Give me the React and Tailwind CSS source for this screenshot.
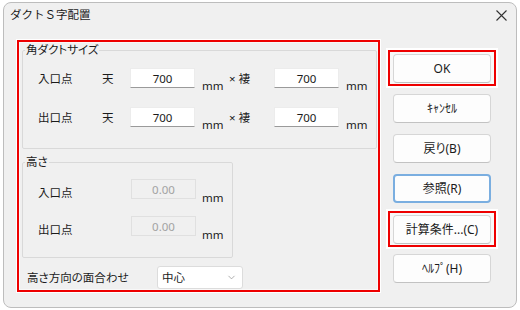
import { ChevronDown } from "lucide-react";

const font = "font-['Noto_Sans','Noto_Sans_CJK_JP',sans-serif]";
const palt = "[font-feature-settings:'palt']";

function Btn({ children, focused, className = "" }) {
  return (
    <button
      type="button"
      className={`w-[98px] h-[29px] flex items-center justify-center rounded-[4px] bg-[#fdfdfd] text-[12px] leading-[14px] text-[#1b1b1b] ${palt} ${
        focused ? "border-2 border-[#7aaee0]" : "border border-[#d6d6d6] border-b-[#c2c2c2]"
      } ${className}`}
    >
      {children}
    </button>
  );
}

function RedBox({ children, className = "" }) {
  return (
    <div className={`w-[108px] h-[36px] border-2 border-[#ee0000] shadow-[0_0_0_2px_#fff] bg-[#f8f8f8] pt-[2px] px-[3px] ${className}`}>
      {children}
    </div>
  );
}

function SizeRow({ label, className = "" }) {
  return (
    <div className={`flex h-[20px] text-[11.5px] ${className}`}>
      <span className="w-[64px] leading-[20px] mt-[1px]">{label}</span>
      <span className="w-[28px] leading-[20px] mt-[1px]">天</span>
      <input
        readOnly
        value="700"
        className="w-[65px] h-[20px] bg-white text-center text-[11.5px] border border-[#ececec] border-b-[#9a9a9a] outline-none"
      />
      <span className="w-[34px] pl-[7px] mt-[11px] leading-[14px]">mm</span>
      <span className="w-[45px] leading-[20px] mt-[1px]">× 褄</span>
      <input
        readOnly
        value="700"
        className="w-[65px] h-[20px] bg-white text-center text-[11.5px] border border-[#ececec] border-b-[#9a9a9a] outline-none"
      />
      <span className="pl-[7px] mt-[11px] leading-[14px]">mm</span>
    </div>
  );
}

function HeightRow({ label, className = "" }) {
  return (
    <div className={`flex h-[20px] text-[11.5px] ${className}`}>
      <span className="w-[93px] leading-[20px] mt-[4px]">{label}</span>
      <input
        readOnly
        disabled
        value="0.00"
        className="w-[65px] h-[20px] bg-[#f0f0f0] text-center text-[11.5px] text-[#a3a3a3] border border-[#e0e0e0] outline-none"
      />
      <span className="pl-[6px] mt-[12px] leading-[14px]">mm</span>
    </div>
  );
}

export default function App() {
  return (
    <div className={`w-[520px] h-[310px] bg-white pt-[2px] px-[3px] pb-[2px] text-[#1b1b1b] ${font}`}>
      <div className="h-[306px] rounded-[8px] border border-[#bdbdbd] bg-[#f0f0f0] flex flex-col overflow-hidden">
        <div className="h-[24px] flex items-center justify-between pl-[6px] pr-[9px]">
          <span className="text-[11.5px] leading-[14px]">ダクトＳ字配置</span>
          <svg width="11" height="11" viewBox="0 0 11 11" className="mt-[1px]">
            <path d="M0.5 0.5 L10.5 10.5 M10.5 0.5 L0.5 10.5" stroke="#333" strokeWidth="1.1" fill="none" />
          </svg>
        </div>

        <div className="flex pl-[13px] pt-[13px]">
          {/* left panel */}
          <div className={`w-[363px] h-[252px] border-2 border-[#ee0000] shadow-[0_0_0_1px_#fff,inset_0_0_0_1px_#f8f8f8] flex flex-col ${palt}`}>
            <fieldset className="ml-[3px] w-[355px] h-[107px] border border-[#d9d9d9] rounded-[2px]">
              <legend className="ml-[2px] px-[1px] text-[11.5px] leading-[16px]">角ダクトサイズ</legend>
              <div className="pl-[15px]">
                <SizeRow label="入口点" className="mt-[10px]" />
                <SizeRow label="出口点" className="mt-[19px]" />
              </div>
            </fieldset>

            <fieldset className="ml-[3px] mt-[5px] w-[211px] h-[104px] border border-[#d9d9d9] rounded-[2px]">
              <legend className="ml-[2px] px-[1px] text-[11.5px] leading-[16px]">高さ</legend>
              <div className="pl-[15px]">
                <HeightRow label="入口点" className="mt-[9px]" />
                <HeightRow label="出口点" className="mt-[17px]" />
              </div>
            </fieldset>

            <div className="flex items-center mt-[8px] pl-[8px] h-[23px]">
              <span className="w-[130px] text-[11.5px] leading-[16px]">高さ方向の面合わせ</span>
              <div className="w-[86px] h-[23px] bg-white border border-[#dcdcdc] rounded-[3px] flex items-center justify-between pl-[4px] pr-[5px]">
                <span className="text-[11.5px] leading-[16px]">中心</span>
                <ChevronDown size={11} strokeWidth={1.5} color="#8a8a8a" />
              </div>
            </div>
          </div>

          {/* buttons */}
          <div className="ml-[8px] pt-[10px] flex flex-col">
            <RedBox>
              <Btn>OK</Btn>
            </RedBox>
            <Btn className="ml-[5px] mt-[8px]">ｷｬﾝｾﾙ</Btn>
            <Btn className="ml-[5px] mt-[11px]">戻り(B)</Btn>
            <Btn focused className="ml-[5px] mt-[11px]">参照(R)</Btn>
            <RedBox className="mt-[8px]">
              <Btn>計算条件...(C)</Btn>
            </RedBox>
            <Btn className="ml-[5px] mt-[7px]">ﾍﾙﾌﾟ(H)</Btn>
          </div>
        </div>
      </div>
    </div>
  );
}
